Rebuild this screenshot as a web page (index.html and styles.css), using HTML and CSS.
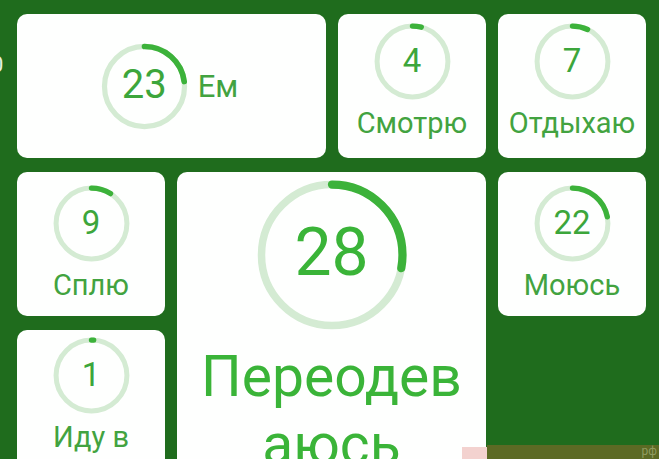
FILE: index.html
```html
<!DOCTYPE html>
<html lang="ru">
<head>
<meta charset="utf-8">
<title>Tiles</title>
<link rel="stylesheet" href="styles.css">
</head>
<body>
<span class="edge-glyph">0</span>
<div class="grid">
  <div class="card card-wide">
    <div class="ring ring-md">
      <svg viewBox="0 0 100 100"><circle class="track" cx="50" cy="50" r="46" stroke-width="6"/><circle class="arc" cx="50" cy="50" r="46" stroke-width="6.5" pathLength="100" stroke-dasharray="23 100" transform="rotate(-90 50 50)"/></svg>
      <span class="num num-md">23</span>
    </div>
    <span class="label">Ем</span>
  </div>
  <div class="card card-top">
    <div class="ring ring-sm">
      <svg viewBox="0 0 100 100"><circle class="track" cx="50" cy="50" r="46" stroke-width="6.5"/><circle class="arc" cx="50" cy="50" r="46" stroke-width="7" pathLength="100" stroke-dasharray="4 100" transform="rotate(-90 50 50)"/></svg>
      <span class="num num-sm">4</span>
    </div>
    <span class="label">Смотрю</span>
  </div>
  <div class="card card-top">
    <div class="ring ring-sm">
      <svg viewBox="0 0 100 100"><circle class="track" cx="50" cy="50" r="46" stroke-width="6.5"/><circle class="arc" cx="50" cy="50" r="46" stroke-width="7" pathLength="100" stroke-dasharray="7 100" transform="rotate(-90 50 50)"/></svg>
      <span class="num num-sm">7</span>
    </div>
    <span class="label">Отдыхаю</span>
  </div>
  <div class="card">
    <div class="ring ring-sm">
      <svg viewBox="0 0 100 100"><circle class="track" cx="50" cy="50" r="46" stroke-width="6.5"/><circle class="arc" cx="50" cy="50" r="46" stroke-width="7" pathLength="100" stroke-dasharray="9 100" transform="rotate(-90 50 50)"/></svg>
      <span class="num num-sm">9</span>
    </div>
    <span class="label">Сплю</span>
  </div>
  <div class="card card-big">
    <div class="ring ring-lg">
      <svg viewBox="0 0 100 100"><circle class="track" cx="50" cy="50" r="47" stroke-width="5"/><circle class="arc" cx="50" cy="50" r="47" stroke-width="5.5" pathLength="100" stroke-dasharray="28 100" transform="rotate(-90 50 50)"/></svg>
      <span class="num num-lg">28</span>
    </div>
    <span class="label label-lg">Переодев<br>аюсь</span>
  </div>
  <div class="card">
    <div class="ring ring-sm">
      <svg viewBox="0 0 100 100"><circle class="track" cx="50" cy="50" r="46" stroke-width="6.5"/><circle class="arc" cx="50" cy="50" r="46" stroke-width="7" pathLength="100" stroke-dasharray="22 100" transform="rotate(-90 50 50)"/></svg>
      <span class="num num-sm">22</span>
    </div>
    <span class="label">Моюсь</span>
  </div>
  <div class="card card-tall">
    <div class="ring ring-sm">
      <svg viewBox="0 0 100 100"><circle class="track" cx="50" cy="50" r="46" stroke-width="6.5"/><circle class="arc" cx="50" cy="50" r="46" stroke-width="7" pathLength="100" stroke-dasharray="1 100" transform="rotate(-90 50 50)"/></svg>
      <span class="num num-sm">1</span>
    </div>
    <span class="label">Иду в</span>
  </div>
</div>
<div class="watermark">
  <span class="wm-pink"></span>
  <span class="wm-bar">рф</span>
</div>
</body>
</html>
```
FILE: styles.css
```css
html, body {
  margin: 0;
  padding: 0;
}
body {
  width: 659px;
  height: 459px;
  overflow: hidden;
  background: #1f6c1d;
  font-family: Roboto, "Noto Sans", "Liberation Sans", sans-serif;
  position: relative;
}
.grid {
  display: grid;
  grid-template-columns: 148px 149px 148px 148px;
  grid-template-rows: 144px 144px 144px;
  column-gap: 12px;
  row-gap: 14px;
  padding: 14px 0 0 17px;
}
.card {
  background: #fefffe;
  border-radius: 10px;
  display: flex;
  flex-direction: column;
  align-items: center;
  justify-content: center;
  overflow: hidden;
}
.card-top {
  padding-bottom: 8px;
}
.card-wide {
  grid-column: 1 / 3;
  flex-direction: row;
  gap: 10px;
  padding-right: 4px;
}
.card-big {
  grid-column: 2 / 4;
  grid-row: 2 / 4;
  justify-content: flex-start;
  padding-top: 8px;
}
.card-tall {
  justify-content: flex-start;
  padding-top: 7px;
}
.ring {
  display: grid;
  place-items: center;
  flex: none;
}
.ring > * {
  grid-area: 1 / 1;
}
.ring svg {
  width: 100%;
  height: 100%;
  display: block;
}
.ring-sm { width: 77px; height: 77px; }
.ring-md { width: 87px; height: 87px; }
.ring-lg { width: 150px; height: 150px; }
.track {
  fill: none;
  stroke: #d4ebd3;
}
.arc {
  fill: none;
  stroke: #3cb23a;
  stroke-linecap: round;
}
.num {
  color: #3ca63b;
  line-height: 1.17;
}
.num-sm { font-size: 33px; }
.num-md { font-size: 40px; margin-top: -2px; }
.num-lg { font-size: 66px; color: #3ab438; margin-top: -4px; }
.label {
  color: #42a340;
  font-size: 29px;
  line-height: 1.17;
  margin-top: 7px;
  text-align: center;
  white-space: nowrap;
}
.card-wide .label {
  margin-top: 2px;
  font-size: 31px;
}
.label-lg {
  font-size: 57px;
  line-height: 68px;
  color: #3ab438;
  margin-top: 13px;
}
.edge-glyph {
  position: absolute;
  left: -9px;
  top: 52px;
  font-size: 22px;
  color: #e6f1e4;
}
.watermark {
  position: absolute;
  left: 462px;
  right: 0;
  bottom: 0;
  height: 14px;
  display: flex;
  align-items: flex-end;
}
.wm-pink {
  width: 25px;
  height: 12px;
  background: #f3d2cf;
}
.wm-bar {
  flex: 1;
  height: 14px;
  background: #5c6a24;
  color: rgba(210, 220, 170, 0.45);
  font-size: 12px;
  line-height: 12px;
  text-align: right;
  padding-right: 2px;
}
```
